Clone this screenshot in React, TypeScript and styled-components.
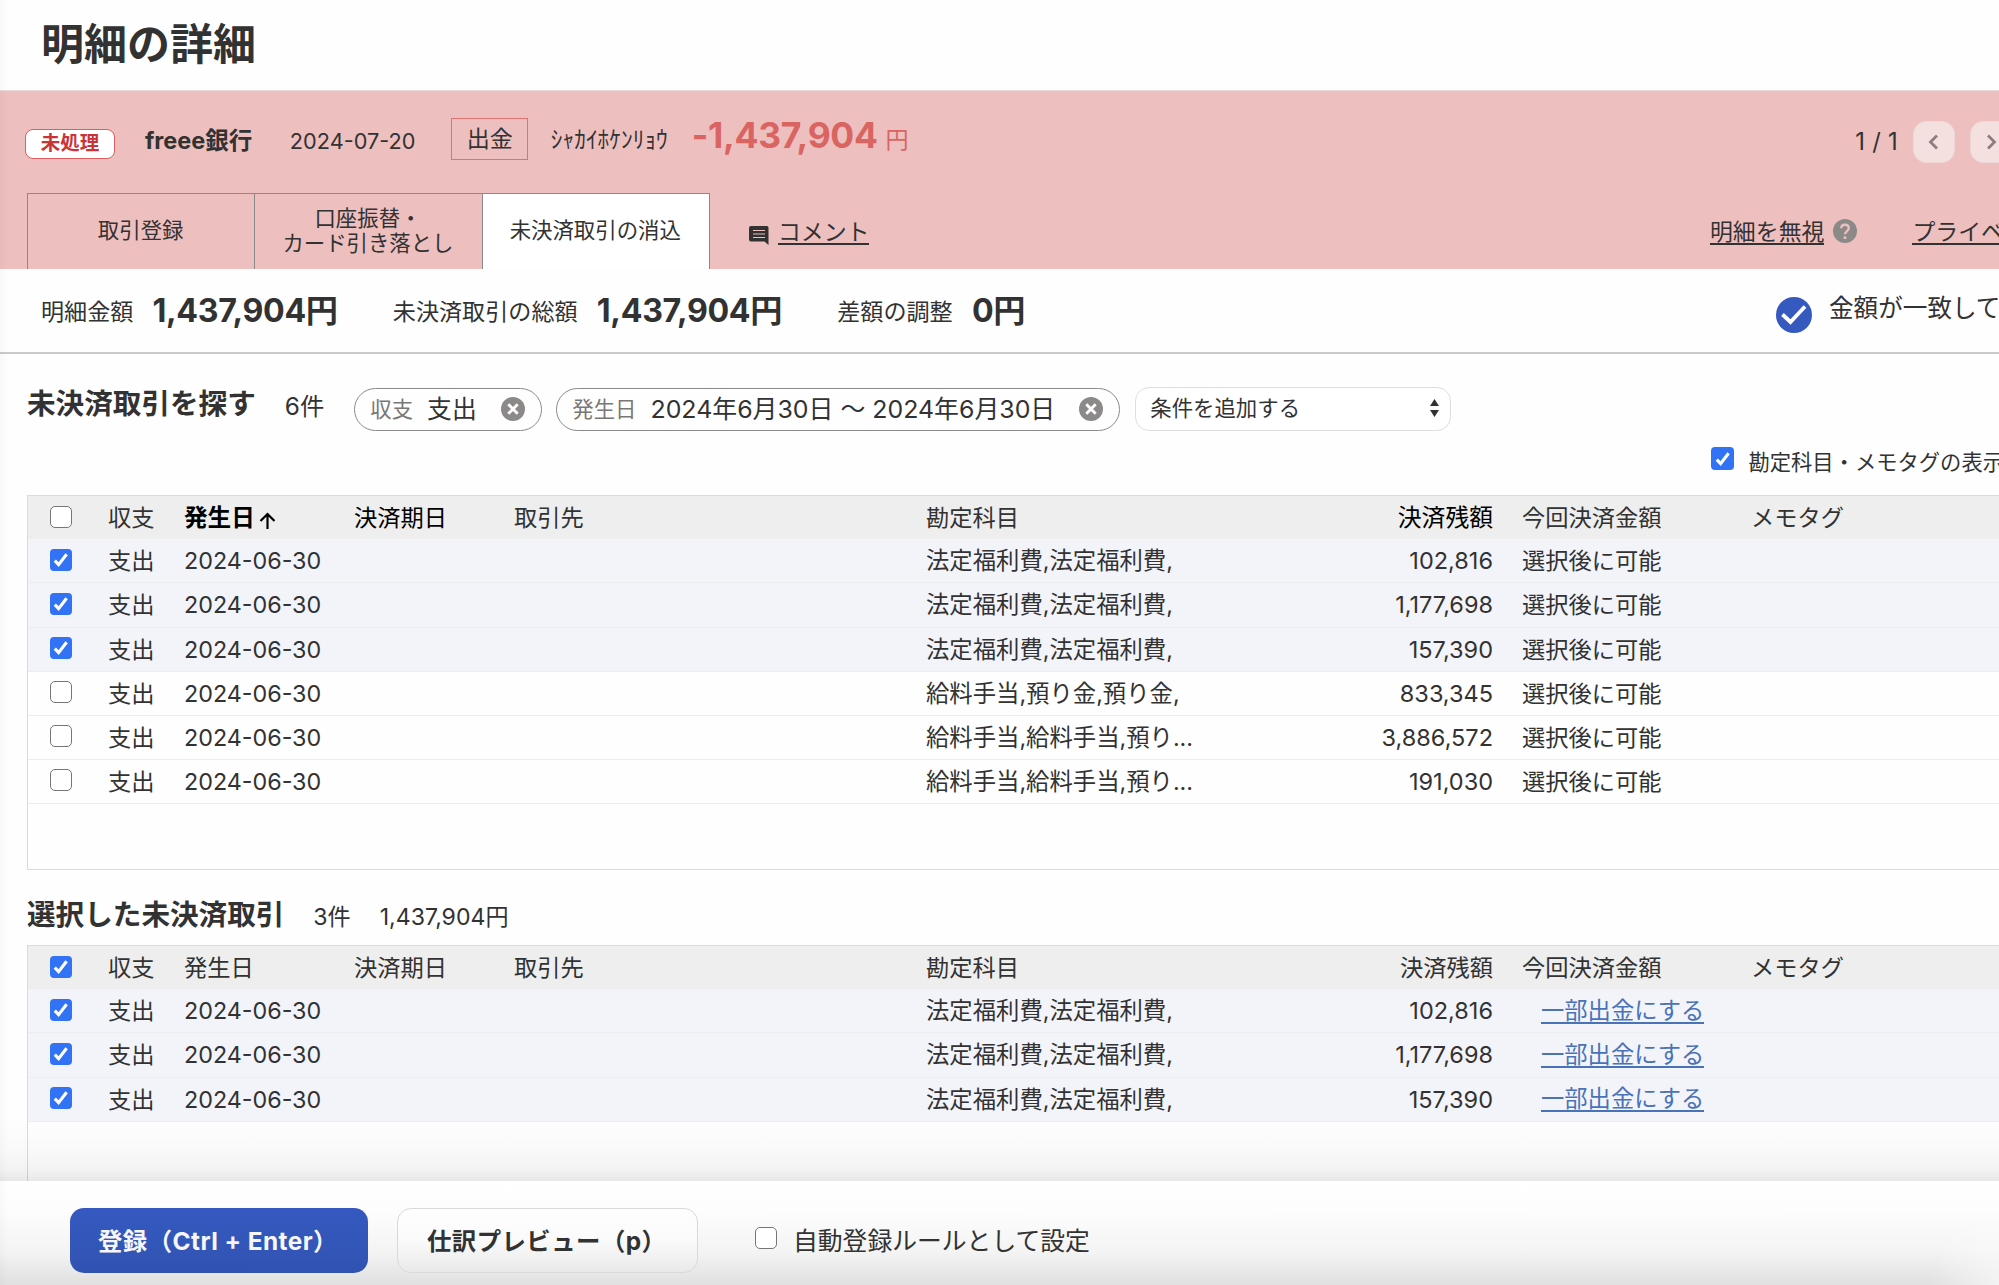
import React from "react";
import styled, { createGlobalStyle, css } from "styled-components";

const ink = "#323232";
const line = "#8c8989";

const GlobalStyle = createGlobalStyle`
  * { box-sizing: border-box; }
  body {
    margin: 0;
    background: #fff;
    color: ${ink};
    font-family: Inter, "Noto Sans CJK JP", sans-serif;
    font-size: 23.1px;
    overflow: hidden;
  }
`;

const Page = styled.div`
  position: relative;
  width: 1999px;
  height: 1285px;
  overflow: hidden;
  background: #fefefe;
  display: flex;
  flex-direction: column;
  white-space: nowrap;
`;

const EdgeShade = styled.div`
  position: absolute;
  inset: 0 auto 0 0;
  width: 8px;
  background: linear-gradient(to right, rgba(0, 0, 0, 0.025), rgba(0, 0, 0, 0));
  pointer-events: none;
`;

const TitleBar = styled.header`
  flex: none;
  height: 91px;
  padding: 0 41px;
  border-bottom: 1px solid #eadada;
`;

const Title = styled.h1`
  margin: 0;
  font-size: 43px;
  line-height: 88px;
  font-weight: 700;
`;

const Text = styled.span<{
  $size?: number;
  $bold?: boolean;
  $track?: number;
  $color?: string;
  $ml?: number;
  $drop?: number;
}>`
  display: block;
  flex: none;
  line-height: 32px;
  font-size: ${(p) => p.$size ?? 23.1}px;
  font-weight: ${(p) => (p.$bold ? 700 : 400)};
  letter-spacing: ${(p) => p.$track ?? 0}px;
  color: ${(p) => p.$color ?? "inherit"};
  margin-left: ${(p) => p.$ml ?? 0}px;
  margin-top: ${(p) => p.$drop ?? 0}px;
`;

const Statement = styled.section`
  flex: none;
  height: 178px;
  background: #edbfbf;
  display: flex;
  flex-direction: column;
  justify-content: space-between;
`;

const StatementTop = styled.div`
  display: flex;
  align-items: flex-start;
  width: 2012px;
  padding: 27px 0 0 25px;
`;

const Badge = styled.span`
  width: 90px;
  height: 30px;
  margin-top: 11px;
  border: 1.5px solid #dc5f60;
  border-radius: 8px;
  background: #fff;
  color: #cc3337;
  font-size: 19.5px;
  font-weight: 700;
  line-height: 27px;
  text-align: center;
`;

const Direction = styled.span`
  width: 77px;
  height: 42px;
  margin-left: 36px;
  border: 1.5px solid #de7472;
  line-height: 41px;
  text-align: center;
`;

const Pager = styled.div`
  display: flex;
  align-items: center;
  margin: 3px 0 0 auto;
`;

const PagerButton = styled.button`
  display: flex;
  align-items: center;
  justify-content: center;
  width: 42px;
  height: 42px;
  margin: 0 0 0 15px;
  padding: 0;
  border: 1px solid #f0d6d6;
  border-radius: 13px;
  background: #f5e0e0;
`;

const StatementBottom = styled.div`
  display: flex;
  width: 2004px;
  padding-left: 27px;
`;

const Tabs = styled.nav`
  display: flex;
  height: 76px;
  border-left: 1px solid ${line};
`;

const Tab = styled.div<{ $active?: boolean }>`
  display: flex;
  align-items: center;
  justify-content: center;
  width: 227.3px;
  padding: 0 1px 1px 0;
  border: solid ${line};
  border-width: 1px 1px 0 0;
  background: ${(p) => (p.$active ? "#fff" : "transparent")};
  font-size: 21.4px;
  line-height: 25.5px;
  text-align: center;
`;

const Link = styled.a<{ $blue?: boolean }>`
  display: block;
  height: 25px;
  line-height: 24px;
  border-bottom: 2px solid ${(p) => (p.$blue ? "#4a72b8" : ink)};
  color: ${(p) => (p.$blue ? "#4a72b8" : ink)};
`;

const CommentLink = styled.div`
  display: flex;
  gap: 9px;
  margin: 27px 0 0 39px;
  font-size: 22.9px;

  svg {
    margin-top: 6px;
  }
`;

const SideLinks = styled.div`
  display: flex;
  margin: 27px 0 0 auto;
  font-size: 22.9px;

  svg {
    margin: -1px 55px 0 9px;
  }
`;

const Summary = styled.section`
  flex: none;
  display: flex;
  height: 85px;
  padding: 27px 0 0 41px;
  border-bottom: 2px solid #cacaca;
`;

const MatchNotice = styled.div`
  display: flex;
  width: 223px;
  margin-left: auto;

  svg {
    flex: none;
    margin: 1px 17px 0 0;
  }
`;

const SearchBar = styled.section`
  flex: none;
  display: flex;
  align-items: flex-start;
  height: 87px;
  padding: 33px 0 0 27px;
`;

const Chip = styled.div<{ $width: number; $ml: number }>`
  display: flex;
  flex: none;
  align-items: center;
  width: ${(p) => p.$width}px;
  height: 43px;
  margin: 1px 0 0 ${(p) => p.$ml}px;
  padding: 0 16px 2px 15px;
  border: 1.4px solid ${line};
  border-radius: 22px;
`;

const ChipClose = styled.span`
  display: flex;
  margin-left: auto;
`;

const Select = styled.div`
  display: flex;
  flex: none;
  align-items: center;
  justify-content: space-between;
  width: 316px;
  height: 44px;
  margin-left: 15px;
  padding: 0 11px 2px 14px;
  border: 1.5px solid #dedede;
  border-radius: 14px;
  background: #fff;
`;

const Toggle = styled.div`
  flex: none;
  display: flex;
  align-items: flex-start;
  justify-content: flex-end;
  height: 54px;
  width: 2004px;
  padding-top: 6px;
`;

const CheckBox = styled.span<{ $on?: boolean; $size?: number }>`
  display: flex;
  flex: none;
  align-items: center;
  justify-content: center;
  width: ${(p) => p.$size ?? 22}px;
  height: ${(p) => p.$size ?? 22}px;
  border-radius: 4px;
  ${(p) =>
    p.$on
      ? css`
          background: #3273f6;
        `
      : css`
          background: #fff;
          border: 1.6px solid #767676;
          border-radius: 5px;
        `}
`;

const Table = styled.div<{ $height?: number }>`
  flex: none;
  width: 2040px;
  height: ${(p) => p.$height}px;
  margin-left: 27px;
  border: 1px solid #dadada;
  font-size: 23.2px;
`;

const Row = styled.div<{ $head?: boolean; $selected?: boolean }>`
  display: grid;
  grid-template-columns: 80px 76px 170px 160px 412px 300px 267px 29px 229px 1fr;
  align-items: start;
  height: ${(p) => (p.$head ? 43.3 : 44.15)}px;
  background: ${(p) => (p.$head ? "#eeeeee" : p.$selected ? "#f3f4fa" : "transparent")};
  border-bottom: ${(p) => (p.$head ? "none" : "1.5px solid #ededf0")};
`;

const Cell = styled.div<{ $right?: boolean; $size?: number; $strong?: boolean; $black?: boolean }>`
  display: flex;
  height: 43px;
  line-height: 44.5px;
  justify-content: ${(p) => (p.$right ? "flex-end" : "flex-start")};
  font-size: ${(p) => p.$size ?? 23.25}px;
  font-weight: ${(p) => (p.$strong ? 700 : 400)};
  color: ${(p) => (p.$black ? "#000" : "inherit")};
`;

const SortArrow = styled.svg`
  margin: 16px 0 0 4px;
`;

const CheckCell = styled.div<{ $head?: boolean }>`
  padding: ${(p) => (p.$head ? 10 : 9.3)}px 0 0 21.5px;
`;

const PayLink = styled.div`
  margin: 9.9px 0 0 19px;
  font-size: 23.3px;
  width: 163px;
`;

const SelectedHead = styled.section`
  flex: none;
  display: flex;
  height: 75px;
  padding: 29px 0 0 27px;
`;

const Footer = styled.footer`
  position: absolute;
  left: 0;
  right: 0;
  bottom: 0;
  display: flex;
  align-items: flex-start;
  height: 104px;
  padding: 27px 0 0 70px;
  background: linear-gradient(to bottom, #fff 0, #fdfdfd 30px, #f4f4f4 70px, #e0e0e0 104px);
`;

const FooterShade = styled.div`
  position: absolute;
  left: 0;
  right: 0;
  bottom: 104px;
  height: 62px;
  background: linear-gradient(
    to bottom,
    rgba(0, 0, 0, 0),
    rgba(0, 0, 0, 0.02) 50%,
    rgba(0, 0, 0, 0.045) 80%,
    rgba(0, 0, 0, 0.085)
  );
`;

const CornerGlow = styled.div`
  position: absolute;
  right: 0;
  bottom: 0;
  width: 70px;
  height: 75px;
  background: radial-gradient(ellipse at bottom right, rgba(255, 255, 255, 0.6), rgba(255, 255, 255, 0) 70%);
`;

const Button = styled.button<{ $primary?: boolean }>`
  flex: none;
  width: ${(p) => (p.$primary ? 298 : 301)}px;
  height: 65px;
  margin-right: ${(p) => (p.$primary ? 29 : 57)}px;
  padding: 0 0 3px ${(p) => (p.$primary ? 28 : 29)}px;
  border-radius: 14px;
  border: ${(p) => (p.$primary ? "none" : "1.5px solid #d9d9d9")};
  background: ${(p) =>
    p.$primary
      ? "linear-gradient(to bottom, #3659c1, #3053b2)"
      : "linear-gradient(to bottom, #fefefe, #fafafa 50%, #e9e9e9)"};
  color: ${(p) => (p.$primary ? "#f6f6f8" : ink)};
  font: 700 24.4px Inter, "Noto Sans CJK JP", sans-serif;
  letter-spacing: 0.45px;
  text-align: left;
  white-space: nowrap;
`;

const AutoRule = styled.label`
  display: flex;
  gap: 16px;
  padding-top: 19px;
`;

const Check = ({ on, size }: { on?: boolean; size?: number }) => (
  <CheckBox $on={on} $size={size}>
    {on && (
      <svg width="18" height="18" viewBox="0 0 18 18" fill="none">
        <path d="M2.8 9.6 L6.6 13.6 L14.6 3.2" stroke="#fff" strokeWidth="3.1" />
      </svg>
    )}
  </CheckBox>
);

const CloseIcon = () => (
  <svg width="24" height="24" viewBox="0 0 24 24">
    <circle cx="12" cy="12" r="12" fill={line} />
    <path d="M7.3 7.3 L16.7 16.7 M16.7 7.3 L7.3 16.7" stroke="#fff" strokeWidth="2.9" />
  </svg>
);

const Chevron = ({ right }: { right?: boolean }) => (
  <svg width="16" height="16" viewBox="0 0 16 16" fill="none">
    <path d={right ? "M5 1.5 L11.5 8 L5 14.5" : "M11 1.5 L4.5 8 L11 14.5"} stroke="#8f7c7c" strokeWidth="2.8" />
  </svg>
);

type Entry = { account: string; amount: string; selected: boolean };

const entries: Entry[] = [
  { account: "法定福利費,法定福利費,", amount: "102,816", selected: true },
  { account: "法定福利費,法定福利費,", amount: "1,177,698", selected: true },
  { account: "法定福利費,法定福利費,", amount: "157,390", selected: true },
  { account: "給料手当,預り金,預り金,", amount: "833,345", selected: false },
  { account: "給料手当,給料手当,預り...", amount: "3,886,572", selected: false },
  { account: "給料手当,給料手当,預り...", amount: "191,030", selected: false },
];

const HeadRow = ({ sortable }: { sortable?: boolean }) => (
  <Row $head>
    <CheckCell $head>
      <Check on={!sortable} />
    </CheckCell>
    <Cell>収支</Cell>
    <Cell $strong={sortable} $black={sortable} $size={sortable ? 23.6 : undefined}>
      発生日
      {sortable && (
        <SortArrow width="17" height="18" viewBox="0 0 17 18" fill="none">
          <path d="M8.5 17 V2.5 M1.5 9 L8.5 2 L15.5 9" stroke="#000" strokeWidth="2.2" />
        </SortArrow>
      )}
    </Cell>
    <Cell $black={sortable}>決済期日</Cell>
    <Cell>取引先</Cell>
    <Cell>勘定科目</Cell>
    <Cell $right $black={sortable} $size={sortable ? 23.8 : undefined}>
      決済残額
    </Cell>
    <span />
    <Cell>今回決済金額</Cell>
    <Cell>メモタグ</Cell>
  </Row>
);

const EntryRow = ({ entry, link }: { entry: Entry; link?: boolean }) => (
  <Row $selected={entry.selected}>
    <CheckCell>
      <Check on={entry.selected} />
    </CheckCell>
    <Cell>支出</Cell>
    <Cell $size={23.3}>2024-06-30</Cell>
    <span />
    <span />
    <Cell $size={23.35}>{entry.account}</Cell>
    <Cell $right $size={23.5}>{entry.amount}</Cell>
    <span />
    {link ? (
      <PayLink>
        <Link $blue>一部出金にする</Link>
      </PayLink>
    ) : (
      <Cell>選択後に可能</Cell>
    )}
  </Row>
);

export default function App() {
  return (
    <Page>
      <GlobalStyle />
      <TitleBar>
        <Title>明細の詳細</Title>
      </TitleBar>

      <Statement>
        <StatementTop>
          <Badge>未処理</Badge>
          <Text $bold $ml={30} $drop={7} $size={23.5}>freee銀行</Text>
          <Text $ml={37.5} $drop={7} $size={21.7}>2024-07-20</Text>
          <Direction>出金</Direction>
          <Text $ml={22.5} $drop={6} $size={23.4}>ｼｬｶｲﾎｹﾝﾘｮｳ</Text>
          <Text $ml={24} $drop={2} $size={35.5} $track={-0.35} $bold $color="#d96461">-1,437,904</Text>
          <Text $ml={8} $drop={6} $color="#d96461">円</Text>
          <Pager>
            <Text $size={23.8} $track={0.3}>1 / 1</Text>
            <PagerButton>
              <Chevron />
            </PagerButton>
            <PagerButton>
              <Chevron right />
            </PagerButton>
          </Pager>
        </StatementTop>
        <StatementBottom>
          <Tabs>
            <Tab>取引登録</Tab>
            <Tab>
              口座振替・
              <br />
              カード引き落とし
            </Tab>
            <Tab $active>未決済取引の消込</Tab>
          </Tabs>
          <CommentLink>
            <svg width="20" height="19" viewBox="0 0 20 19">
              <path d="M2 0 H18 Q19.5 0 19.5 2 V19 L15.5 15.5 H2 Q0 15.5 0 13.5 V2 Q0 0 2 0 Z" fill={ink} />
              <path d="M4 4.5 H16 M4 8 H16 M4 11.5 H16" stroke="#edbfbf" strokeWidth="1.2" />
            </svg>
            <Link>コメント</Link>
          </CommentLink>
          <SideLinks>
            <Link>明細を無視</Link>
            <svg width="24" height="24" viewBox="0 0 24 24">
              <circle cx="12" cy="12" r="12" fill={line} />
              <path
                d="M8.2 9.3 C8.2 4.6 15.8 4.6 15.8 9.3 C15.8 12 12 12.2 12 15.3"
                stroke="#edbfbf"
                strokeWidth="2.4"
                fill="none"
              />
              <rect x="10.7" y="17.4" width="2.6" height="2.6" fill="#edbfbf" />
            </svg>
            <Link>プライベ</Link>
          </SideLinks>
        </StatementBottom>
      </Statement>

      <Summary>
        <Text>明細金額</Text>
        <Text $size={32.2} $track={-0.35} $drop={-1} $bold $ml={19}>1,437,904円</Text>
        <Text $ml={55.2}>未決済取引の総額</Text>
        <Text $size={32.2} $track={-0.35} $drop={-1} $bold $ml={19.2}>1,437,904円</Text>
        <Text $ml={55.2}>差額の調整</Text>
        <Text $size={32.2} $track={-0.35} $drop={-1} $bold $ml={19.2}>0円</Text>
        <MatchNotice>
          <svg width="36" height="36" viewBox="0 0 36 36">
            <circle cx="18" cy="18" r="18" fill="#3659c0" />
            <path d="M6.5 17.5 L14.5 25 L29 9.5" stroke="#fff" strokeWidth="3.8" fill="none" />
          </svg>
          <Text $size={24.6} $drop={-4}>金額が一致して</Text>
        </MatchNotice>
      </Summary>

      <SearchBar>
        <Text $size={28.6} $bold $drop={1}>未決済取引を探す</Text>
        <Text $ml={29} $drop={3} $size={24.4}>6件</Text>
        <Chip $width={188} $ml={30}>
          <Text $size={21.4} $color="#7a7777">収支</Text>
          <Text $size={24.8} $ml={14}>支出</Text>
          <ChipClose>
            <CloseIcon />
          </ChipClose>
        </Chip>
        <Chip $width={564} $ml={14}>
          <Text $size={21.4} $color="#7a7777">発生日</Text>
          <Text $size={24.9} $ml={14}>2024年6月30日 〜 2024年6月30日</Text>
          <ChipClose>
            <CloseIcon />
          </ChipClose>
        </Chip>
        <Select>
          <Text $size={21.4}>条件を追加する</Text>
          <svg width="9" height="18" viewBox="0 0 9 18">
            <path d="M0 7 L4.5 0 L9 7 Z M0 11 L4.5 18 L9 11 Z" fill={ink} />
          </svg>
        </Select>
      </SearchBar>

      <Toggle>
        <Check on size={23} />
        <Text $size={21.3} $ml={14} $drop={-1}>勘定科目・メモタグの表示</Text>
      </Toggle>

      <Table $height={375}>
        <HeadRow sortable />
        {entries.map((e, i) => (
          <EntryRow key={i} entry={e} />
        ))}
      </Table>

      <SelectedHead>
        <Text $size={28.6} $bold>選択した未決済取引</Text>
        <Text $ml={29} $drop={2}>3件</Text>
        <Text $ml={29} $drop={2}>1,437,904円</Text>
      </SelectedHead>

      <Table $height={340}>
        <HeadRow />
        {entries
          .filter((e) => e.selected)
          .map((e, i) => (
            <EntryRow key={i} entry={e} link />
          ))}
      </Table>

      <FooterShade />
      <Footer>
        <Button $primary>登録（Ctrl + Enter）</Button>
        <Button>仕訳プレビュー（p）</Button>
        <AutoRule>
          <Check />
          <Text $size={24.8} $drop={-2}>自動登録ルールとして設定</Text>
        </AutoRule>
        <CornerGlow />
      </Footer>
      <EdgeShade />
    </Page>
  );
}
